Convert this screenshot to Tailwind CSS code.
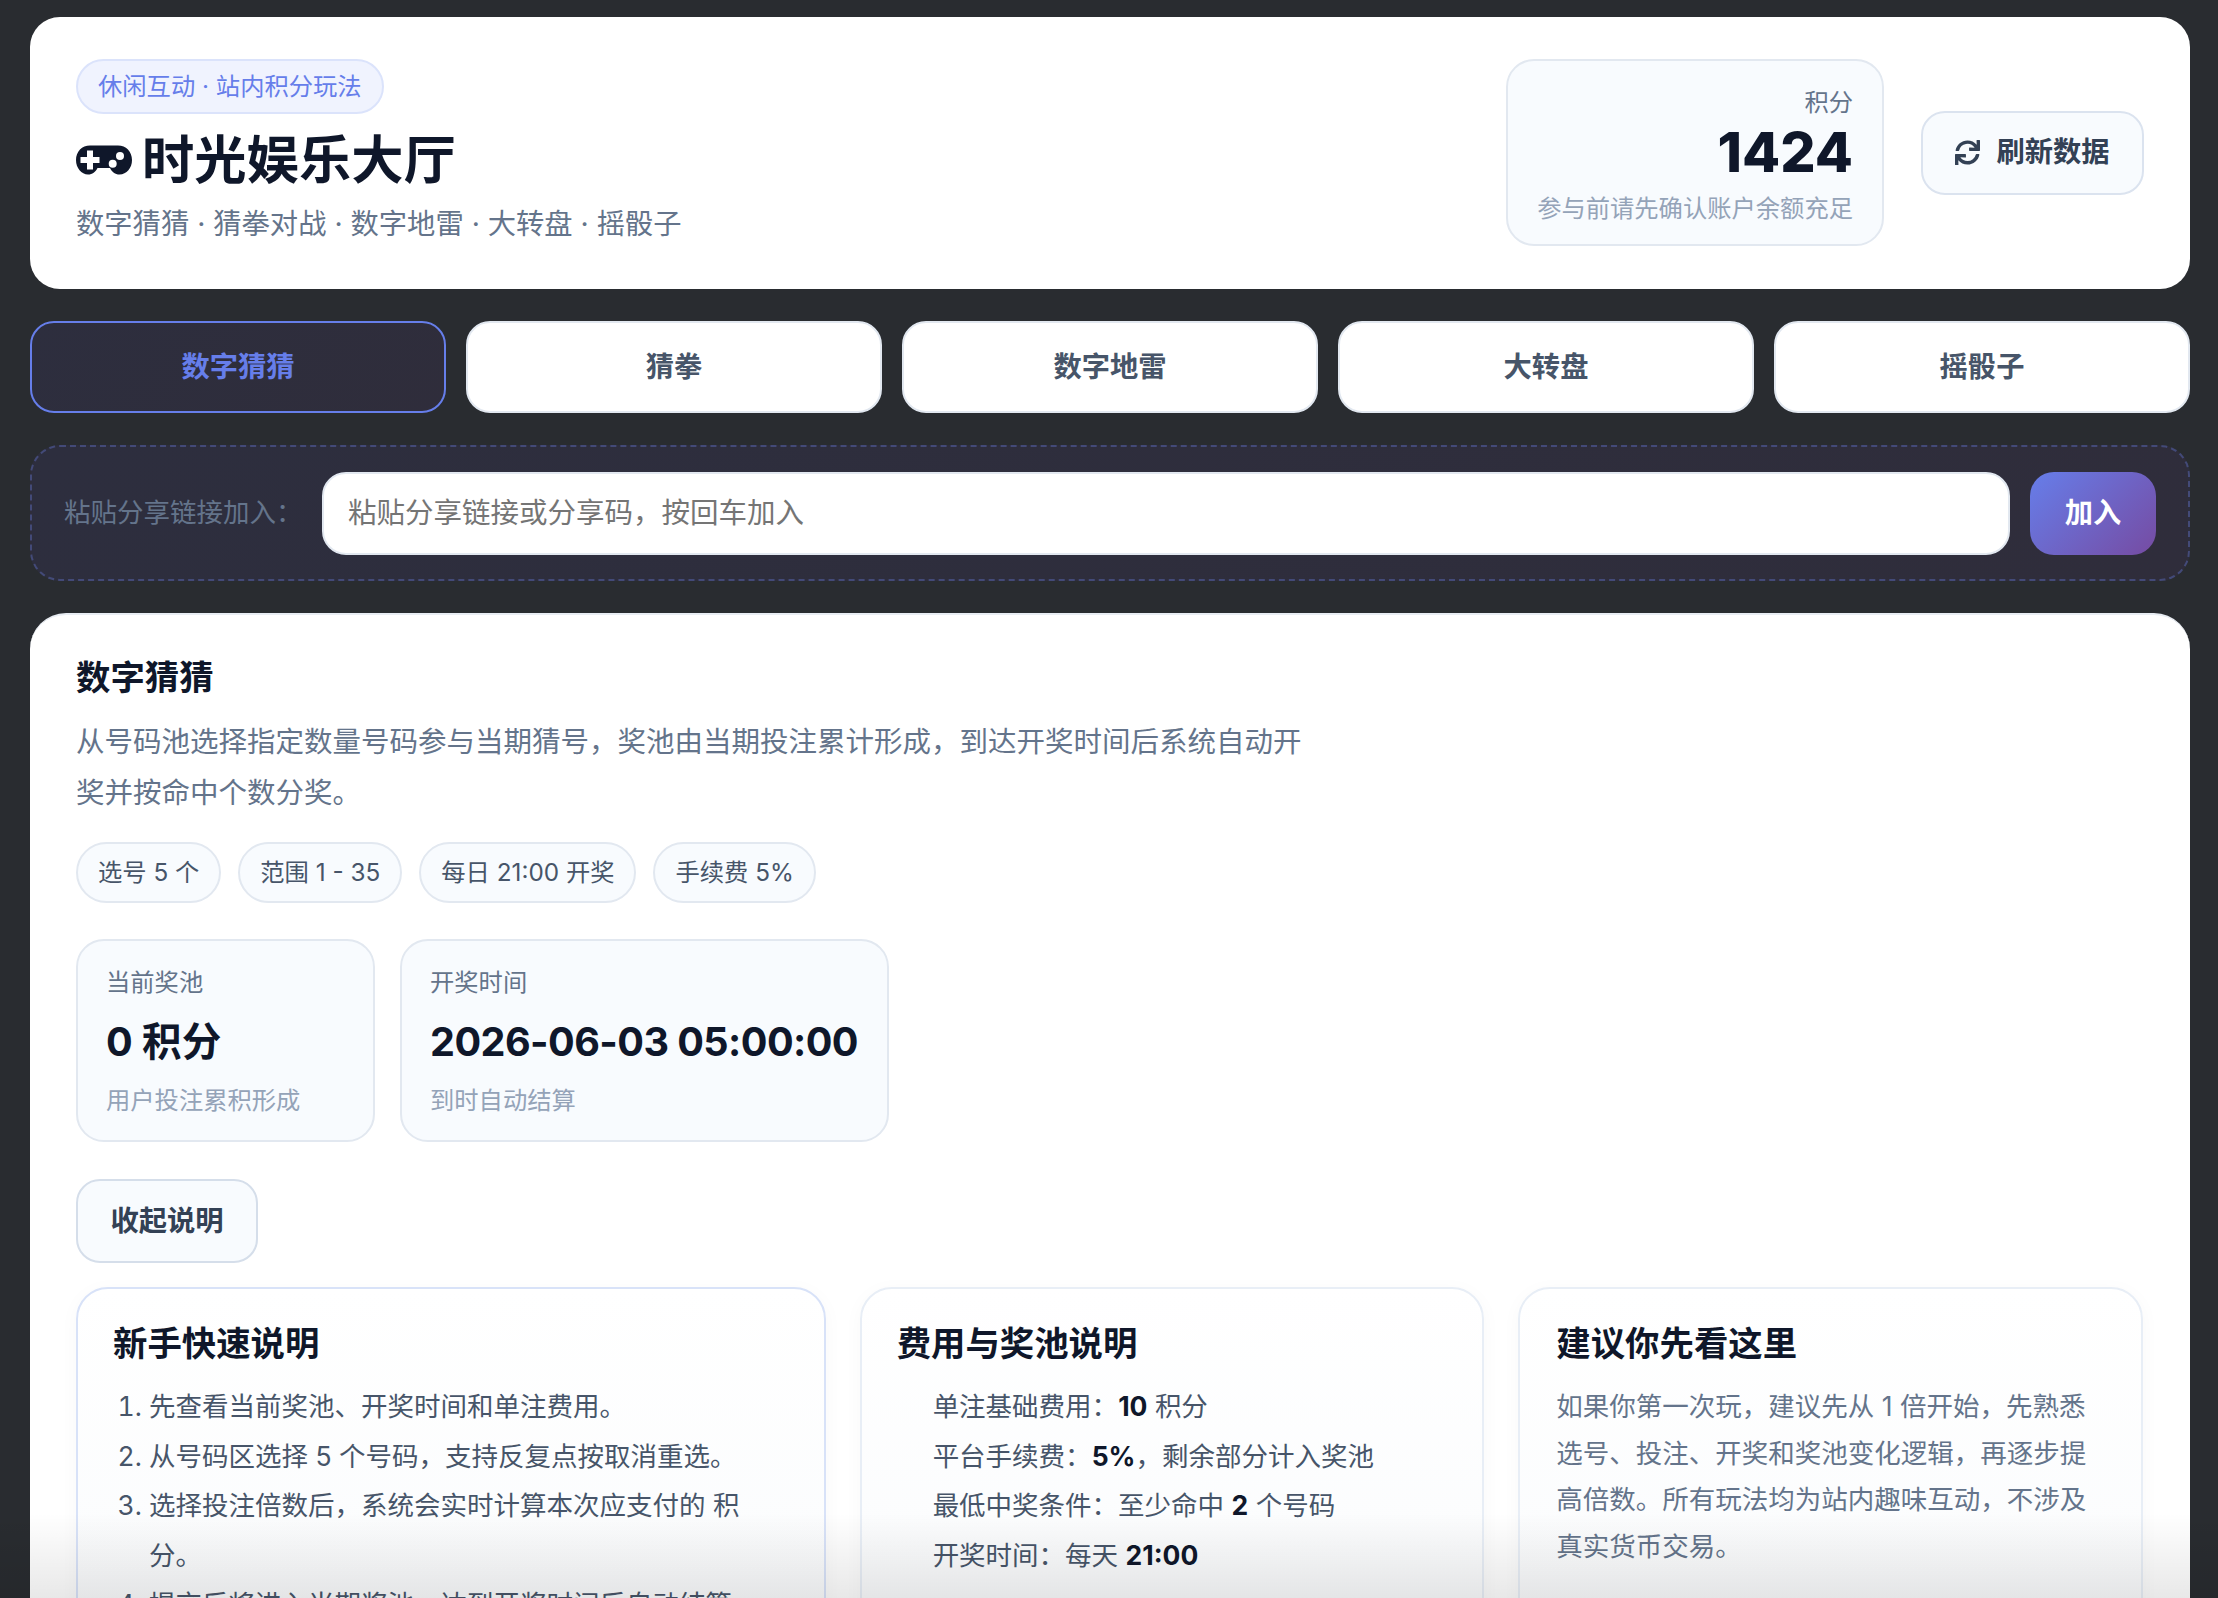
<!DOCTYPE html>
<html lang="zh-CN">
<head>
  <meta charset="UTF-8" />
  <meta name="viewport" content="width=device-width, initial-scale=1.0" />
  <title>时光娱乐大厅</title>
  <script src="https://cdn.jsdelivr.net/npm/@tailwindcss/browser@4"></script>
</head>
<body class="relative h-[1598px] overflow-hidden bg-[#292c30] font-['Inter','Noto_Sans_CJK_SC',sans-serif] text-[#0f172a]">
  <div class="pl-[30px] pr-[28px] pt-[17px]">

    <!-- Header -->
    <header class="flex h-[272px] items-start justify-between rounded-[30px] bg-white pl-[46px] pr-[46px] pt-[42px]">
      <div>
        <span class="inline-flex h-[55px] items-center rounded-full border-2 border-[#dbe3fb] bg-[#f0f3fe] px-[20px] text-[24.300px] text-[#667eea]">休闲互动 · 站内积分玩法</span>
        <h1 class="mt-[11px] flex h-[70px] items-center gap-[10px] text-[52.300px] font-bold leading-none">
          <svg class="h-[30px] w-[56px]" viewBox="0 0 56 30">
            <path fill="#0f172a" d="M14 0.500h28c8 0 14 6 14 14.500c0 8-5.500 14.500-12.500 14.500c-4.500 0-7.500-2.500-9.500-6.500h-12.500c-2 4-5 6.500-9.500 6.500C5.500 29.500 0 23 0 15C0 6.500 6 0.500 14 0.500z" />
            <path fill="#fff" d="M11 5.500h6v6.500h6.500v6H17v6.500h-6V18H4.500v-6H11z" />
            <circle cx="44" cy="11" r="4" fill="#fff" />
            <circle cx="36.700" cy="18.700" r="4" fill="#fff" />
          </svg>
          时光娱乐大厅
        </h1>
        <p class="mt-[9px] text-[28.300px] leading-[40px] text-[#64748b]">数字猜猜 · 猜拳对战 · 数字地雷 · 大转盘 · 摇骰子</p>
      </div>
      <div class="flex items-center gap-[37px]">
        <div class="flex h-[187px] w-[378px] flex-col items-end rounded-[28px] border-2 border-[#e2e8f0] bg-[#f8fbfe] pr-[29px] pt-[24px]">
          <span class="text-[24.300px] leading-[34px] text-[#64748b]">积分</span>
          <span class="mt-[1px] text-[55.500px] font-extrabold leading-[64px]">1424</span>
          <span class="mt-[6px] text-[24.300px] leading-[36px] text-[#94a3b8]">参与前请先确认账户余额充足</span>
        </div>
        <button class="flex h-[84px] w-[223px] items-center justify-center gap-[16px] rounded-[24px] border-[2.500px] border-[#dbe3ef] bg-[#f8fbfe] text-[28.300px] font-bold text-[#334155]">
          <svg class="h-[25px] w-[25px]" viewBox="0 0 512 512" fill="#334155">
            <path d="M440.650 12.570l4 82.770A247.160 247.160 0 0 0 255.830 8C134.730 8 33.910 94.920 12.290 209.820A12 12 0 0 0 24.090 224h49.050a12 12 0 0 0 11.670-9.260 175.910 175.910 0 0 1 317-56.940l-101.460-4.860a12 12 0 0 0-12.570 12v47.410a12 12 0 0 0 12 12H500a12 12 0 0 0 12-12V12a12 12 0 0 0-12-12h-47.370a12 12 0 0 0-11.980 12.570zM255.830 432a175.610 175.610 0 0 1-146-77.800l101.800 4.870a12 12 0 0 0 12.570-12v-47.400a12 12 0 0 0-12-12H12a12 12 0 0 0-12 12V500a12 12 0 0 0 12 12h47.350a12 12 0 0 0 12-12.600l-4.150-82.570A247.170 247.170 0 0 0 255.830 504c121.110 0 221.930-86.920 243.550-201.820a12 12 0 0 0-11.800-14.180h-49.050a12 12 0 0 0-11.670 9.260A175.860 175.860 0 0 1 255.830 432z" />
          </svg>
          刷新数据
        </button>
      </div>
    </header>

    <!-- Tabs -->
    <nav class="mt-[32px] grid grid-cols-5 gap-[20px]">
      <button class="h-[92px] rounded-[24px] border-[2.500px] border-[#667eea] bg-[linear-gradient(135deg,#2d2e3e,#2f2d3b)] text-[28.300px] font-bold text-[#667eea]">数字猜猜</button>
      <button class="h-[92px] rounded-[24px] border-2 border-[#e2e8f0] bg-white text-[28.300px] font-bold text-[#475569]">猜拳</button>
      <button class="h-[92px] rounded-[24px] border-2 border-[#e2e8f0] bg-white text-[28.300px] font-bold text-[#475569]">数字地雷</button>
      <button class="h-[92px] rounded-[24px] border-2 border-[#e2e8f0] bg-white text-[28.300px] font-bold text-[#475569]">大转盘</button>
      <button class="h-[92px] rounded-[24px] border-2 border-[#e2e8f0] bg-white text-[28.300px] font-bold text-[#475569]">摇骰子</button>
    </nav>

    <!-- Join by share link -->
    <div class="mt-[32px] flex h-[136px] items-center gap-[20px] rounded-[30px] border-2 border-dashed border-[#434a78] bg-[linear-gradient(135deg,#2d2e3e,#2f2d3b)] pl-[32px] pr-[32px]">
      <span class="w-[238px] shrink-0 whitespace-nowrap text-[26.500px] text-[#64748b]">粘贴分享链接加入：</span>
      <div class="flex h-[83px] flex-1 items-center rounded-[24px] border-2 border-[#e2e8f0] bg-white pl-[24px] text-[28.500px] text-[#757575]">粘贴分享链接或分享码，按回车加入</div>
      <button class="h-[83px] w-[126px] shrink-0 rounded-[24px] bg-[linear-gradient(135deg,#667eea,#764ba2)] text-[28.300px] font-bold text-white">加入</button>
    </div>

    <!-- Game panel -->
    <main class="mt-[32px] h-[1100px] rounded-[36px] border-t-2 border-[#e8edf3] bg-white pl-[46px] pr-[47px] pt-[40px]">
      <h2 class="text-[34.400px] font-bold leading-[46px]">数字猜猜</h2>
      <p class="mt-[16px] w-[1240px] text-[28.500px] leading-[50.500px] text-[#64748b]">从号码池选择指定数量号码参与当期猜号，奖池由当期投注累计形成，到达开奖时间后系统自动开奖并按命中个数分奖。</p>

      <div class="mt-[24px] flex gap-[17px]">
        <span class="flex h-[61px] items-center rounded-full border-2 border-[#e2e8f0] bg-[#f8fbfe] px-[20px] text-[24.300px] text-[#475569]">选号 5 个</span>
        <span class="flex h-[61px] items-center rounded-full border-2 border-[#e2e8f0] bg-[#f8fbfe] px-[20px] text-[24.300px] text-[#475569]">范围 1 - 35</span>
        <span class="flex h-[61px] items-center rounded-full border-2 border-[#e2e8f0] bg-[#f8fbfe] px-[20px] text-[24.300px] text-[#475569]">每日 21:00 开奖</span>
        <span class="flex h-[61px] items-center rounded-full border-2 border-[#e2e8f0] bg-[#f8fbfe] px-[20px] text-[24.300px] text-[#475569]">手续费 5%</span>
      </div>

      <div class="mt-[36px] flex gap-[25px]">
        <div class="h-[203px] w-[299px] rounded-[28px] border-2 border-[#e2e8f0] bg-[#f8fbfe] px-[28px] pt-[23px]">
          <div class="text-[24.300px] leading-[36px] text-[#64748b]">当前奖池</div>
          <div class="mt-[15px] text-[39.600px] font-bold leading-[54px]">0 积分</div>
          <div class="mt-[13px] text-[24.300px] leading-[36px] text-[#94a3b8]">用户投注累积形成</div>
        </div>
        <div class="h-[203px] rounded-[28px] border-2 border-[#e2e8f0] bg-[#f8fbfe] pl-[28px] pr-[29px] pt-[23px]">
          <div class="text-[24.300px] leading-[36px] text-[#64748b]">开奖时间</div>
          <div class="mt-[15px] whitespace-nowrap text-[39.600px] font-bold leading-[54px] tracking-[-0.55px]">2026-06-03 05:00:00</div>
          <div class="mt-[13px] text-[24.300px] leading-[36px] text-[#94a3b8]">到时自动结算</div>
        </div>
      </div>

      <button class="mt-[37px] h-[84px] w-[182px] rounded-[24px] border-[2.500px] border-[#d5deea] bg-[#f8fbfe] text-[28.300px] font-bold text-[#334155]">收起说明</button>

      <section class="mt-[24px] grid grid-cols-[1.2fr_1fr_1fr] gap-[34px]">
        <div class="h-[500px] rounded-[32px] border-2 border-[#d8e2f8] bg-[linear-gradient(180deg,#ffffff,#f8fafc)] px-[35px] pt-[30px] shadow-[0_4px_20px_rgba(15,23,42,0.03)]">
          <h3 class="text-[34.400px] font-bold leading-[50px]">新手快速说明</h3>
          <ol class="mt-[13px] list-decimal pl-[36px] text-[26.500px] leading-[49.500px] text-[#475569]">
            <li>先查看当前奖池、开奖时间和单注费用。</li>
            <li>从号码区选择 5 个号码，支持反复点按取消重选。</li>
            <li>选择投注倍数后，系统会实时计算本次应支付的 积分。</li>
            <li>提交后将进入当期奖池，达到开奖时间后自动结算。</li>
          </ol>
        </div>
        <div class="h-[500px] rounded-[32px] border-2 border-[#e8eef6] bg-[linear-gradient(180deg,#ffffff,#f8fafc)] px-[35px] pt-[30px] shadow-[0_4px_20px_rgba(15,23,42,0.03)]">
          <h3 class="text-[34.400px] font-bold leading-[50px]">费用与奖池说明</h3>
          <ul class="mt-[13px] pl-[36px] text-[26.500px] leading-[49.500px] text-[#475569]">
            <li>单注基础费用：<strong class="font-bold text-[#0f172a]">10</strong> 积分</li>
            <li>平台手续费：<strong class="font-bold text-[#0f172a]">5%</strong>，剩余部分计入奖池</li>
            <li>最低中奖条件：至少命中 <strong class="font-bold text-[#0f172a]">2</strong> 个号码</li>
            <li>开奖时间：每天 <strong class="font-bold text-[#0f172a]">21:00</strong></li>
          </ul>
        </div>
        <div class="h-[500px] rounded-[32px] border-2 border-[#e8eef6] bg-[linear-gradient(180deg,#ffffff,#f8fafc)] px-[36px] pt-[30px] shadow-[0_4px_20px_rgba(15,23,42,0.03)]">
          <h3 class="text-[34.400px] font-bold leading-[50px]">建议你先看这里</h3>
          <p class="mt-[14px] text-[26.500px] leading-[46.700px] text-[#64748b]">如果你第一次玩，建议先从 1 倍开始，先熟悉选号、投注、开奖和奖池变化逻辑，再逐步提高倍数。所有玩法均为站内趣味互动，不涉及真实货币交易。</p>
        </div>
      </section>
    </main>
  </div>

  <!-- bottom fade -->
  <div class="pointer-events-none absolute inset-x-0 bottom-0 h-[85px] bg-[linear-gradient(180deg,rgba(0,0,0,0),rgba(0,0,0,0.09))]"></div>
</body>
</html>
